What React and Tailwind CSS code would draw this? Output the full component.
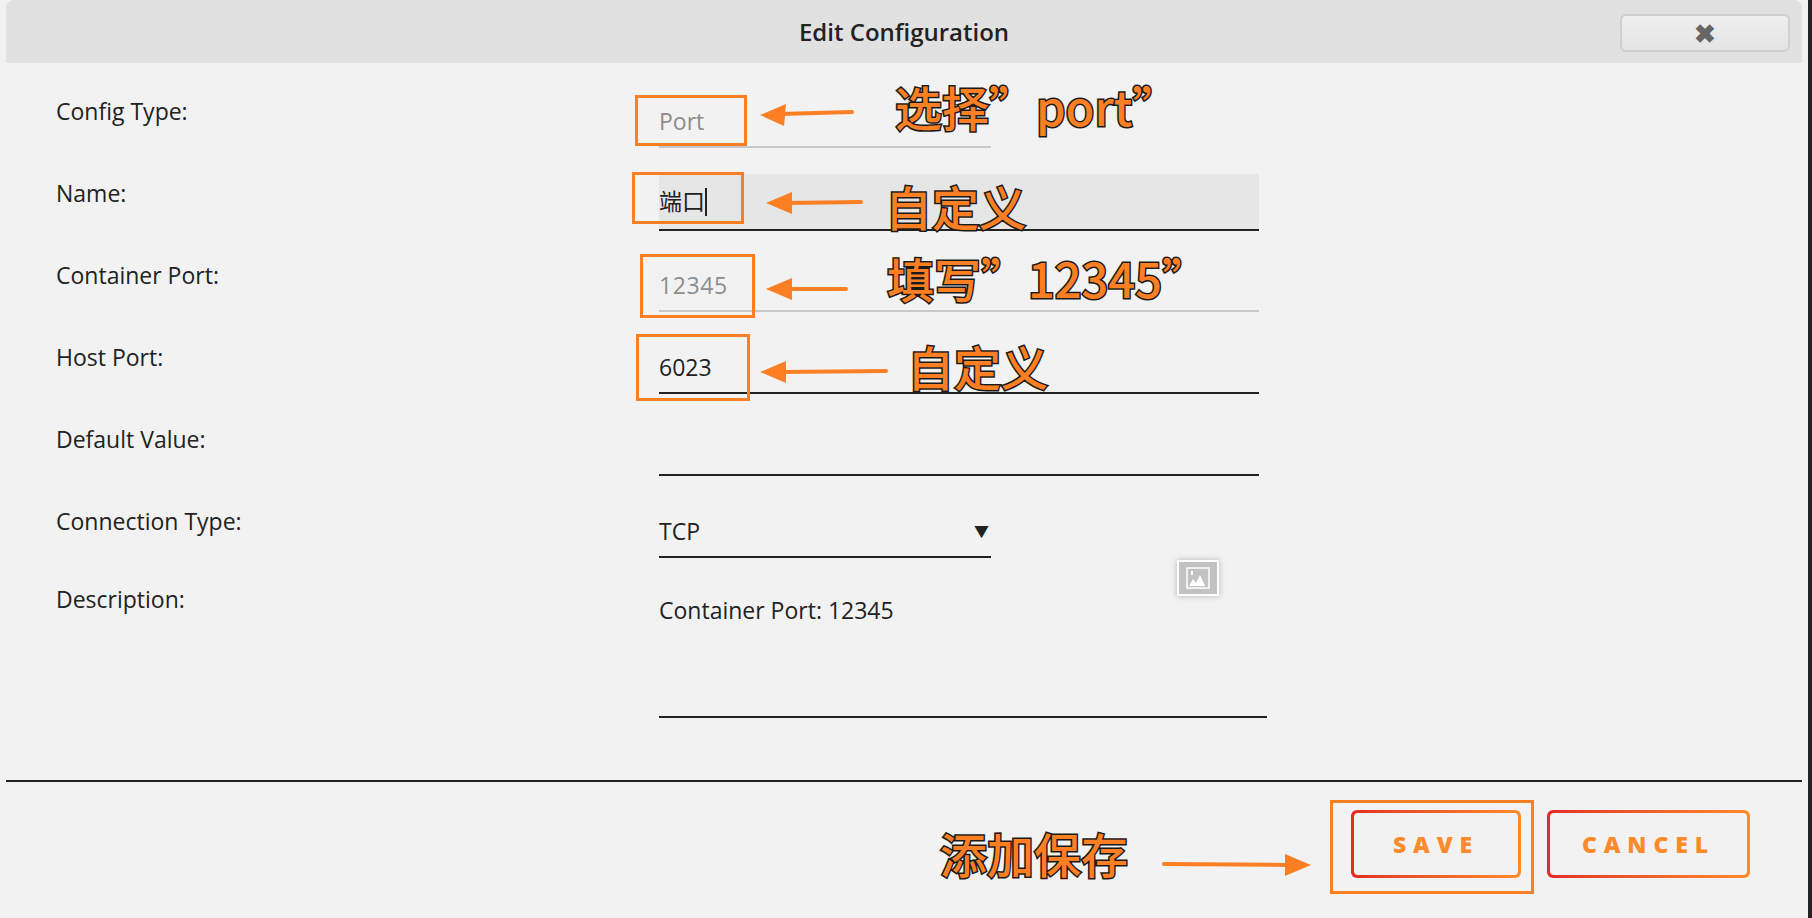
import React from 'react';

const font = { fontFamily: '"Open Sans", "Noto Sans", "Noto Sans CJK SC", sans-serif' };

const Row = ({ label, labelPt = 'pt-[27px]', h = 'h-[82px]', children }) => (
  <div className={`flex ${h}`}>
    <div className={`w-[659px] shrink-0 pl-[56px] ${labelPt} text-[23px] leading-[28px] text-[#222]`}>{label}</div>
    <div className="flex-1">{children}</div>
  </div>
);

const Note = ({ className, children }) => (
  <div
    className={`absolute text-[47px] font-medium leading-none text-[#fd7f23] [-webkit-text-stroke:3px_#1a1a1a] [paint-order:stroke_fill] ${className}`}
    style={{ fontFamily: '"Noto Sans CJK SC", "Noto Sans", sans-serif' }}
  >
    {children}
  </div>
);

const GradButton = ({ children, w }) => (
  <div className={`${w} h-[68px] rounded-[6px] p-[3px] bg-gradient-to-r from-[#e32a27] to-[#fd8a2b]`}>
    <div className="h-full w-full rounded-[4px] bg-[#f2f2f2] flex items-center justify-center text-[23px] font-extrabold tracking-[0.3em] text-[#fd8a2b]">
      {children}
    </div>
  </div>
);

export default function App() {
  return (
    <div className="relative w-[1812px] h-[918px] bg-[#f2f2f2] border-r-[4px] border-[#222] overflow-hidden" style={font}>
      {/* header */}
      <div className="mx-[6px] h-[63px] rounded-t-[8px] bg-[#e1e1e1] relative flex items-center justify-center">
        <span className="text-[24px] font-semibold text-[#222]">Edit Configuration</span>
        <button className="absolute right-[12px] top-[14px] w-[170px] h-[38px] rounded-[6px] border-2 border-[#d0d0d0] bg-gradient-to-b from-[#efefef] to-[#e4e4e4] flex items-center justify-center text-[#666] text-[26px] font-black">
          ✖
        </button>
      </div>

      {/* form */}
      <div className="pt-[7px]">
        <Row label="Config Type:">
          <div className="w-[332px] h-[78px] border-b-2 border-[#c8c8c8] pt-[37px] text-[23px] leading-[28px] text-[#8d8d8d]">Port</div>
        </Row>
        <Row label="Name:">
          <div className="mt-[22px] w-[600px] h-[57px] bg-[#e6e6e6] border-b-2 border-[#222] flex items-center text-[23px] text-[#222]">
            端口<span className="inline-block w-[2px] h-[28px] bg-[#222]" />
          </div>
        </Row>
        <Row label="Container Port:">
          <div className="w-[600px] h-[78px] border-b-2 border-[#c8c8c8] pt-[37px] text-[23px] leading-[28px] text-[#8d8d8d] tracking-wide">12345</div>
        </Row>
        <Row label="Host Port:">
          <div className="w-[600px] h-[78px] border-b-2 border-[#222] pt-[37px] text-[23px] leading-[28px] text-[#222]">6023</div>
        </Row>
        <Row label="Default Value:">
          <div className="w-[600px] h-[78px] border-b-2 border-[#222]" />
        </Row>
        <Row label="Connection Type:">
          <div className="w-[332px] h-[78px] border-b-2 border-[#222] pt-[37px] text-[23px] leading-[28px] text-[#222] flex justify-between pr-[2px]">
            <span>TCP</span>
            <span className="text-[15px]">▼</span>
          </div>
        </Row>
        <Row label="Description:" labelPt="pt-[23px]" h="h-[218px]">
          <div className="relative w-[608px] h-[156px] border-b-2 border-[#222] pt-[34px] text-[23px] leading-[28px] text-[#222]">
            Container Port: 12345
            <div className="absolute left-[518px] top-[-2px] w-[42px] h-[36px] shadow-[0_0_6px_rgba(0,0,0,0.25)] bg-[#c2c2c2] border-2 border-white flex items-center justify-center">
              <svg width="24" height="22" viewBox="0 0 24 22">
                <rect x="1" y="1" width="22" height="20" fill="none" stroke="#fff" strokeWidth="1.5" />
                <path d="M3 19 L7 12 L10 16 L14 8 L19 19 Z" fill="#fff" />
                <rect x="5" y="4" width="2" height="4" fill="#fff" />
              </svg>
            </div>
          </div>
        </Row>
      </div>

      {/* footer */}
      <div className="border-t-2 border-[#222] mx-[6px] flex justify-end gap-[26px] pt-[28px] pr-[52px]">
        <GradButton w="w-[170px]">SAVE</GradButton>
        <GradButton w="w-[203px]">CANCEL</GradButton>
      </div>

      {/* annotations */}
      <div className="absolute left-[635px] top-[95px] w-[112px] h-[51px] border-[3px] border-[#fd7f23]" />
      <div className="absolute left-[632px] top-[172px] w-[112px] h-[52px] border-[3px] border-[#fd7f23]" />
      <div className="absolute left-[640px] top-[254px] w-[115px] h-[64px] border-[3px] border-[#fd7f23]" />
      <div className="absolute left-[636px] top-[334px] w-[114px] h-[67px] border-[3px] border-[#fd7f23]" />
      <div className="absolute left-[1330px] top-[800px] w-[204px] h-[94px] border-[3px] border-[#fd7f23]" />

      <svg className="absolute inset-0 pointer-events-none" width="1812" height="918">
        <g stroke="#fd7f23" strokeWidth="4" strokeLinecap="round" fill="#fd7f23">
          <line x1="852" y1="112" x2="780" y2="114" />
          <path d="M760 115 L786 104 L784 126 Z" stroke="none" />
          <line x1="861" y1="202" x2="786" y2="203" />
          <path d="M766 203 L792 192 L792 214 Z" stroke="none" />
          <line x1="846" y1="289" x2="786" y2="289" />
          <path d="M766 289 L792 278 L792 300 Z" stroke="none" />
          <line x1="886" y1="371" x2="780" y2="372" />
          <path d="M760 372 L786 361 L786 383 Z" stroke="none" />
          <line x1="1164" y1="864" x2="1290" y2="865" />
          <path d="M1311 865 L1285 854 L1285 876 Z" stroke="none" />
        </g>
      </svg>

      <Note className="left-[895px] top-[82px]">选择”port”</Note>
      <Note className="left-[885px] top-[182px]">自定义</Note>
      <Note className="left-[887px] top-[254px]">填写”12345”</Note>
      <Note className="left-[907px] top-[342px]">自定义</Note>
      <Note className="left-[940px] top-[829px]">添加保存</Note>
    </div>
  );
}
